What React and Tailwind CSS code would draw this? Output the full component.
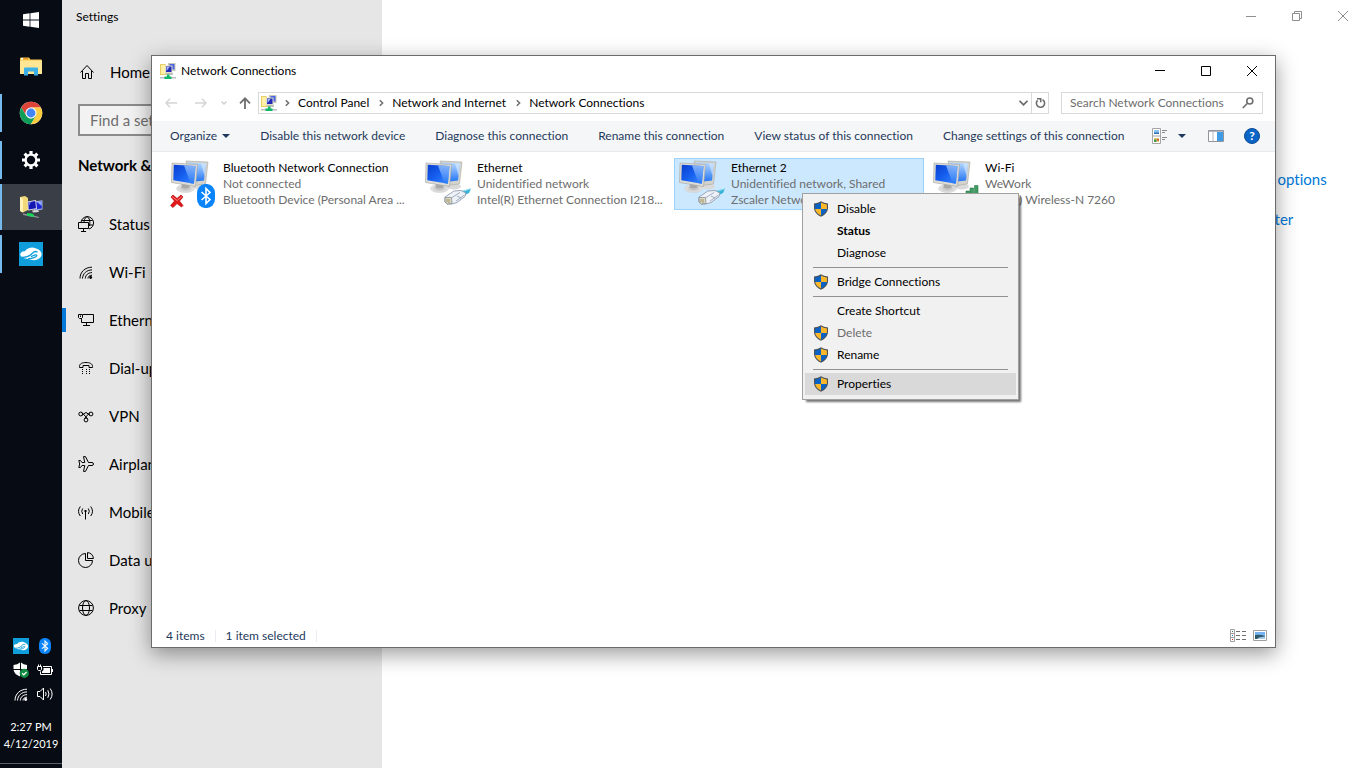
import { useId } from 'react';

const ORANGE = '#fdb82a';
const BLUE = '#0a63c4';

/* ---------- Taskbar icons ---------- */

const WindowsIcon = () => (
    <svg viewBox="0 0 16 16" className="w-4 h-4 fill-white" aria-hidden="true">
        <path d="M0 2.2 6.6 1.3V7.6H0zM7.4 1.2 16 0V7.6H7.4zM0 8.4H6.6V14.7L0 13.8zM7.4 8.4H16V16L7.4 14.8z" />
    </svg>
);

const FolderIcon = () => (
    <svg viewBox="0 0 22 19" className="w-[22px] h-[19px]" aria-hidden="true">
        <path d="M0 1.5Q0 .5 1 .5H9L10.5 2.5H21Q22 2.5 22 3.5V17H0z" fill="#f5c84b" />
        <path d="M1 1H3V2.4H1z" fill="#fff" />
        <path d="M3.5 1H8V2.4H3.5z" fill="#e8912a" />
        <path d="M0 4.5Q0 3.5 1 3.5H21Q22 3.5 22 4.5V16Q22 17 21 17H1Q0 17 0 16z" fill="#ffe694" />
        <path d="M4 11.5Q4 10.5 5 10.5H17Q18 10.5 18 11.5V18.5H14V14.5H8V18.5H4z" fill="#3bb0e6" />
    </svg>
);

const ChromeIcon = () => (
    <svg viewBox="0 0 48 48" className="w-6 h-6" aria-hidden="true">
        <circle cx="24" cy="24" r="22.5" fill="#fff" />
        <path d="M24 1.5A22.5 22.5 0 0 1 43.6 13H24A11 11 0 0 0 14.4 29.5L4.6 12.8A22.5 22.5 0 0 1 24 1.5z" fill="#db4437" />
        <path d="M43.6 13A22.5 22.5 0 0 1 23.5 46.5L33.5 29.5A11 11 0 0 0 24 13z" fill="#ffcd40" />
        <path d="M4.6 12.8 14.4 29.5A11 11 0 0 0 33.5 29.5L23.5 46.5A22.5 22.5 0 0 1 4.6 12.8z" fill="#0f9d58" />
        <circle cx="24" cy="24" r="10.8" fill="#f1f1f1" />
        <circle cx="24" cy="24" r="8.8" fill="#4285f4" />
    </svg>
);

const GearIcon = () => (
    <svg viewBox="0 0 20 20" className="w-5 h-5" aria-hidden="true">
        <g fill="#fff">
            <path d="M8.4 1H11.6V4H8.4zM8.4 16H11.6V19H8.4z" />
            <path d="M8.4 1H11.6V4H8.4zM8.4 16H11.6V19H8.4z" transform="rotate(45 10 10)" />
            <path d="M8.4 1H11.6V4H8.4zM8.4 16H11.6V19H8.4z" transform="rotate(90 10 10)" />
            <path d="M8.4 1H11.6V4H8.4zM8.4 16H11.6V19H8.4z" transform="rotate(135 10 10)" />
        </g>
        <circle cx="10" cy="10" r="5.4" fill="none" stroke="#fff" strokeWidth="2.4" />
    </svg>
);

const NetFolderIcon = () => (
    <svg viewBox="0 0 24 24" className="w-6 h-6" aria-hidden="true">
        <path d="M1 2 6 1 9 3V15L4 17.5 1 16z" fill="#f1d878" />
        <path d="M1 2 4 4V17.5L1 16z" fill="#fff3b8" />
        <path d="M14.500 6.500 23.500 5.200V14.500L15 16z" fill="#a9b6e4" />
        <path d="M15.500 7.600 22.800 6.400V13.400L16 14.600z" fill="#1c25d4" />
        <path d="M18 7.200 22.800 6.400V11z" fill="#8fa8f7" />
        <path d="M8.500 6.500 17 5 18 14 9 15.500z" fill="#e3e3f0" />
        <path d="M9.300 7.300 16.300 6.100 17 13.300 9.700 14.500z" fill="#1416b4" />
        <path d="M9.300 7.300 12 6.900 10 11z" fill="#6e84ea" />
        <path d="M13 15.500 19 15 20 17 14 17.500z" fill="#d8d8d8" />
        <path d="M4 18.500 11 19.500 20 22V23L11 21.500 4 20z" fill="#8d9196" />
        <path d="M8 18 13 18.600 15 20V22L8 20.800z" fill="#18d65c" />
    </svg>
);

const ZscalerIcon = ({ className }) => (
    <svg viewBox="0 0 24 24" className={className} aria-hidden="true">
        <path d="M0 0H24V24H0z" fill="#0f9edb" />
        <path d="M1.300 12.500C1.300 10.200 3.500 8.800 6 9.200 8 6 13 4.800 16.500 6.200 20 7.200 22.800 9.600 22.600 12.600 22.400 15.600 19.500 18 15.500 18.200 12.500 18.300 11.500 17.300 9 17 6 16.600 1.500 15.500 1.300 12.500z" fill="#fff" />
        <path d="M2.500 15.300C8 15.800 11.500 13.500 13.700 10.900 15 9.500 17 9.300 18.500 10" fill="none" stroke="#0f9edb" strokeWidth="1.400" />
        <path d="M9 16.600C13 16.800 18.200 14.700 17.700 13.200 17.300 12.200 14.500 13.300 12 14.600" fill="none" stroke="#0f9edb" strokeWidth="1.300" />
    </svg>
);

const BluetoothIcon = ({ className }) => (
    <svg viewBox="0 0 18 24" className={className} aria-hidden="true">
        <rect width="18" height="24" rx="8" ry="9" fill="#0a84fa" />
        <path d="M4.5 8 13 15.5 9 19.5V4.5L13 8.5 4.5 16" fill="none" stroke="#fff" strokeWidth="1.6" />
    </svg>
);

const DefenderIcon = () => (
    <svg viewBox="0 0 16 16" className="w-4 h-4" aria-hidden="true">
        <path d="M7 .5V7H.5V3Q4.500 2.500 7 .5zM8 .5Q10.500 2.500 14 3V7H8zM.6 8H7V14.500Q1.500 12.500.6 8zM8 8H13.900Q13 12.500 8 14.500z" fill="#fff" />
        <circle cx="11.300" cy="11.300" r="4.600" fill="#128a43" />
        <path d="M9.200 11.300 10.800 12.900 13.500 10" fill="none" stroke="#fff" strokeWidth="1.300" />
    </svg>
);

const BatteryIcon = () => (
    <svg viewBox="0 0 16 12" className="w-4 h-3" aria-hidden="true">
        <path d="M6 2.500H14.500V10.500H3.500V7.500M15.500 5V8" fill="none" stroke="#fff" />
        <path d="M6.500 4H13V9H5V7.500L6.500 6z" fill="#fff" />
        <path d="M.5 2.500H4.500V5.500L3.500 6.500H1.500L.5 5.500zM1.500 .5V2.500M3.500 .5V2.500" fill="none" stroke="#fff" />
    </svg>
);

const SoundIcon = () => (
    <svg viewBox="0 0 17 14" className="w-[17px] h-[14px]" aria-hidden="true">
        <path d="M.5 4.500H3L6.500 1V13L3 9.500H.5zM8.500 5Q9.800 7 8.500 9M10.800 3.200Q13.200 7 10.800 10.800M13.200 1.500Q17 7 13.200 12.500" fill="none" stroke="#fff" />
    </svg>
);

/* ---------- Settings icons ---------- */

const Line = ({ children, className = 'w-4 h-4' }) => (
    <svg viewBox="0 0 16 16" className={className} fill="none" stroke="currentColor" aria-hidden="true">
        {children}
    </svg>
);

const HomeIcon = () => (
    <Line><path d="M1.500 8.500 8 1.500 14.500 8.500M3.500 7V14.500H6.500V9.500H9.500V14.500H12.500V7" /></Line>
);

const StatusIcon = () => (
    <Line>
        <path d="M3 6.500A6.300 6.300 0 1 1 11 13M9 .5C6.500 2 6 4.500 6 6.500M9 .5C11.500 2 12.500 5 11.500 10M3.500 4.500H14.500M11 9H15" />
        <path d="M.5 6.500H10.500V12.500H.5zM5.500 12.500V15.500M3 15.500H8" />
    </Line>
);

const WifiIcon = ({ className }) => (
    <Line className={className}>
        <path d="M2 14.500C2 8 7 3.200 14 3.200M4.500 14.500C4.800 9.500 8.500 6 14 5.900M7.300 14.500C7.500 11 10 8.700 14 8.600M10 14.500C10 12.600 11.500 11.300 14 11.200" />
        <circle cx="12.700" cy="13.500" r="1.400" fill="currentColor" stroke="none" />
    </Line>
);

const EthernetIcon = () => (
    <Line>
        <path d="M5 2.500H15.500V10.500H3.500V6M8.500 10.500V13.500M5 13.500H12M.5 2.500H4.500V5.500L3.500 6.500H1.500L.5 5.500zM2.500 3.500V5" />
    </Line>
);

const DialIcon = () => (
    <Line>
        <path d="M1.500 6.500C1.500 3.500 4.500 2.500 8 2.500S14.500 3.500 14.500 6.500V7.500H11V5.500H5V7.500H1.500z" />
        <path d="M4 9H5V10H4zM8 9H9V10H8zM11 9H12V10H11zM4 11H5V12H4zM8 11H9V12H8zM11 11H12V12H11zM4 13H5V14H4zM8 13H9V14H8zM11 13H12V14H11z" fill="currentColor" stroke="none" />
    </Line>
);

const VpnIcon = () => (
    <Line>
        <circle cx="2.700" cy="6" r="1.900" />
        <circle cx="13" cy="6" r="1.900" />
        <circle cx="8" cy="12" r="1.900" />
        <path d="M4 4.600 9.500 10.500M11.700 4.600 6.500 10.500M4.300 7.200 7 5Q8 4.200 9 5L11.500 7.300" />
    </Line>
);

const PlaneIcon = () => (
    <Line>
        <path d="M5.500 .6H7.500L10.500 6.500H14Q15.500 6.700 15.500 8T14 9.500H10.500L7.500 15.400H5.500L6.800 9.500H4L2.500 11.500H.8L1.700 8 .8 4.500H2.500L4 6.500H6.800z" />
    </Line>
);

const HotspotIcon = () => (
    <Line>
        <path d="M7.500 7V15.500M4.700 4.500Q2.700 7.300 4.700 10M10.300 4.500Q12.300 7.300 10.300 10M2.300 2.500Q-1.300 7.300 2.300 12M12.700 2.500Q16.300 7.300 12.700 12" />
        <path d="M6.500 6H8.500V8H6.500z" fill="currentColor" stroke="none" />
    </Line>
);

const DataIcon = () => (
    <Line>
        <path d="M7.500 1.500A7 7 0 1 0 14.500 8.500H7.500zM9.500 .6A6 6 0 0 1 15.400 6.500H9.500z" />
    </Line>
);

const GlobeIcon = () => (
    <Line>
        <circle cx="8" cy="8" r="7.400" />
        <ellipse cx="8" cy="8" rx="3.500" ry="7.400" />
        <path d="M1.500 5.500H14.500M1.500 10.500H14.500" />
    </Line>
);

/* ---------- Window icons ---------- */

const NetworkIcon = () => (
    <svg viewBox="0 0 16 16" className="w-4 h-4 shrink-0" aria-hidden="true">
        <path d="M0 1H5L6 2V12H0z" fill="#e8cd62" />
        <path d="M1 2H5V11H1z" fill="#fff2a8" />
        <path d="M8 0H15.500V8H8z" fill="#c9c7b6" />
        <path d="M9.500 1H14.500V6.500H9.500z" fill="#4a64e2" />
        <path d="M5 2.500H12.500V10.500H5z" fill="#dedccb" />
        <path d="M6 3.500H11.500V9H6z" fill="#2429b8" />
        <path d="M6.500 4H9.500L6.500 8z" fill="#a9bff8" />
        <path d="M6 10.500H13V11.500H6z" fill="#8b8b7e" />
        <path d="M0 14H16V15.500H0z" fill="#b9bdc1" />
        <path d="M7 11.500H9.500V13.500H11.500V16H4.500V13.500H7z" fill="#0fb866" />
    </svg>
);

const Monitors = () => {
    const id = useId();
    return (
        <svg viewBox="0 0 40 36" className="w-10 h-9" aria-hidden="true">
            <defs>
                <linearGradient id={id + 'a'} x1="0" y1="0" x2="1" y2="1">
                    <stop offset="0" stopColor="#0a3fd0" />
                    <stop offset=".5" stopColor="#1660f0" />
                    <stop offset="1" stopColor="#3a8bff" />
                </linearGradient>
                <linearGradient id={id + 'b'} x1="0" y1="0" x2="0" y2="1">
                    <stop offset="0" stopColor="#b5d8ff" />
                    <stop offset="1" stopColor="#2274f5" />
                </linearGradient>
                <radialGradient id={id + 'c'}>
                    <stop offset="0" stopColor="#b8b8b8" />
                    <stop offset="1" stopColor="#e6e6e6" />
                </radialGradient>
            </defs>
            <ellipse cx="29" cy="27.500" rx="7" ry="3" fill="#dadada" />
            <path d="M15 2 37 3 34.500 25 19 27z" fill="#d3d2cd" stroke="#aaa9a4" strokeWidth=".6" />
            <path d="M16.500 3.600 35 4.600 33 21.500 20 23z" fill={`url(#${id}b)`} />
            <path d="M30 4.300 35 4.600 33.500 17z" fill="#dbeeff" opacity=".6" />
            <ellipse cx="14.500" cy="29.500" rx="9" ry="4" fill={`url(#${id}c)`} stroke="#c6c6c6" strokeWidth=".5" />
            <path d="M11 23H18L18.500 29H10.500z" fill="#a9a9a9" />
            <path d="M1 4 26.500 5.500 24.500 27.500 .5 23.500z" fill="#dddcd7" stroke="#a3a29e" strokeWidth=".6" />
            <path d="M2.800 5.800 24.600 7 22.900 24.800 2.300 21.300z" fill={`url(#${id}a)`} />
            <path d="M13 6.400 24.600 7 22.900 24.800 19.500 24.200z" fill={`url(#${id}b)`} opacity=".7" />
        </svg>
    );
};

const PlugIcon = () => (
    <svg viewBox="0 0 28 17" className="w-7 h-[17px]" aria-hidden="true">
        <path d="M17 3.500 28 .5 26 5 21 7.500z" fill="#35b4d8" />
        <path d="M20 3.500 27 1" stroke="#8fe0f2" strokeWidth="1" />
        <path d="M2 9 11 3 18 2.500 23 5 22 8.500 14 14.500 9 16 4 16 2 14z" fill="#eef2f7" stroke="#8492a6" strokeWidth=".8" />
        <path d="M2 9.500 8.500 9.500 9 15.500 4.500 16 2 14z" fill="#dcdac4" stroke="#7c838c" strokeWidth=".7" />
        <path d="M4 11V14M6 11V15" stroke="#8f8352" strokeWidth=".8" />
        <path d="M9 9.500 17 4.500M13 13 21.500 7M14 8 18 10" stroke="#8b9ab3" strokeWidth=".8" fill="none" />
    </svg>
);

const RedCross = () => (
    <svg viewBox="0 0 14 14" className="w-[14px] h-[14px]" aria-hidden="true">
        <path d="M1 3 3 1 7 4.500 11 1 13 3 9.500 7 13 11.500 11.500 13 7 9.500 3 13.500 .6 11.500 4.500 7z" fill="#e31717" stroke="#b00808" strokeWidth=".7" />
        <path d="M2 2.500 7 6.500 12 2.500" stroke="#f79a9a" fill="none" strokeWidth=".8" />
    </svg>
);

const SignalIcon = () => (
    <svg viewBox="0 0 18 16" className="w-[18px] h-4" aria-hidden="true">
        <path d="M1 9H4.500V16H1zM5 6H8.500V16H5zM9 3H12.500V16H9zM13.500 .5H17V16H13.500z" fill="#3f9c62" stroke="#2a7a4a" strokeWidth=".6" />
    </svg>
);

const ShieldIcon = () => (
    <svg viewBox="0 0 16 16" className="w-4 h-4" aria-hidden="true">
        <path d="M8 .3Q10.700 2.300 15 2.400V7.500Q14.300 13 8 15.800 1.700 13 1 7.500V2.400Q5.300 2.300 8 .3z" fill="#4c5258" />
        <path d="M8 1.600V8H2.100V3.400Q5.500 3.300 8 1.600zM8 8H13.800Q13 12.200 8 14.500z" fill={BLUE} />
        <path d="M8 1.600Q10.500 3.300 13.900 3.400V8H8zM8 8V14.500Q3 12.200 2.200 8z" fill={ORANGE} />
    </svg>
);

const Caret = () => (
    <svg viewBox="0 0 8 4" className="w-2 h-1 fill-[#1e395b]" aria-hidden="true"><path d="M0 0H8L4 4z" /></svg>
);

const Chevron = () => (
    <svg viewBox="0 0 5 8" className="w-[5px] h-2" fill="none" stroke="#6d6d6d" strokeWidth="1.500" aria-hidden="true">
        <path d="M.8 1.300 3.600 4 .8 6.700" />
    </svg>
);

/* ---------- Data ---------- */

const taskbarItems = [
    { name: 'File Explorer', icon: <FolderIcon /> },
    { name: 'Google Chrome', icon: <ChromeIcon />, open: true },
    { name: 'Settings', icon: <GearIcon />, open: true },
    { name: 'Network Connections', icon: <NetFolderIcon />, open: true, active: true },
    { name: 'Zscaler', icon: <ZscalerIcon className="w-6 h-6" />, open: true },
];

const navItems = [
    { label: 'Status', icon: <StatusIcon /> },
    { label: 'Wi-Fi', icon: <WifiIcon /> },
    { label: 'Ethernet', icon: <EthernetIcon />, active: true },
    { label: 'Dial-up', icon: <DialIcon /> },
    { label: 'VPN', icon: <VpnIcon /> },
    { label: 'Airplane mode', icon: <PlaneIcon /> },
    { label: 'Mobile hotspot', icon: <HotspotIcon /> },
    { label: 'Data usage', icon: <DataIcon /> },
    { label: 'Proxy', icon: <GlobeIcon /> },
];

const commands = [
    'Disable this network device',
    'Diagnose this connection',
    'Rename this connection',
    'View status of this connection',
    'Change settings of this connection',
];

const connections = [
    { name: 'Bluetooth Network Connection', status: 'Not connected', device: 'Bluetooth Device (Personal Area ...', type: 'bluetooth' },
    { name: 'Ethernet', status: 'Unidentified network', device: 'Intel(R) Ethernet Connection I218...', type: 'wired' },
    { name: 'Ethernet 2', status: 'Unidentified network, Shared', device: 'Zscaler Network Adapter', type: 'wired', selected: true },
    { name: 'Wi-Fi', status: 'WeWork', device: 'Intel(R) Wireless-N 7260', type: 'wifi' },
];

const menuGroups = [
    [{ label: 'Disable', shield: true }, { label: 'Status', bold: true }, { label: 'Diagnose' }],
    [{ label: 'Bridge Connections', shield: true }],
    [{ label: 'Create Shortcut' }, { label: 'Delete', shield: true, disabled: true }, { label: 'Rename', shield: true }],
    [{ label: 'Properties', shield: true, hover: true }],
];

/* ---------- Components ---------- */

function Taskbar() {
    return (
        <aside className="flex w-[62px] shrink-0 flex-col bg-[#070c14] text-white">
            <button className="flex h-10 items-center justify-center" aria-label="Start"><WindowsIcon /></button>
            <div className="mt-[3px] flex flex-col gap-px">
                {taskbarItems.map((item) => (
                    <button
                        key={item.name}
                        aria-label={item.name}
                        className={`relative flex h-[46px] w-full items-center justify-center ${item.active ? 'bg-[#3a3f47]' : ''}`}
                    >
                        {item.open && (
                            <span className={`absolute left-0 w-0.5 bg-[#76b9ed] ${item.active ? 'inset-y-0' : 'inset-y-1'}`} />
                        )}
                        {item.icon}
                    </button>
                ))}
            </div>
            <div className="mt-auto grid grid-cols-[24px_24px] justify-center pl-1">
                <button className="flex h-6 items-center justify-center" aria-label="Zscaler"><ZscalerIcon className="w-4 h-4" /></button>
                <button className="flex h-6 items-center justify-center" aria-label="Bluetooth"><BluetoothIcon className="w-3 h-4" /></button>
                <button className="flex h-6 items-center justify-center" aria-label="Security"><DefenderIcon /></button>
                <button className="flex h-6 items-center justify-center" aria-label="Power"><BatteryIcon /></button>
                <button className="flex h-6 items-center justify-center" aria-label="Network"><WifiIcon className="h-4 w-4" /></button>
                <button className="flex h-6 items-center justify-center" aria-label="Volume"><SoundIcon /></button>
            </div>
            <button className="mt-3 mb-[11px] text-center text-[11px] leading-[17px]">
                2:27 PM
                <br />
                4/12/2019
            </button>
            <button className="h-[5px] border-t border-[#5d6167]" aria-label="Show desktop" />
        </aside>
    );
}

function SettingsApp() {
    return (
        <>
            <nav className="w-80 shrink-0 bg-[#e6e6e6] text-[15px]">
                <div className="h-8 pt-px pl-3.5 text-xs leading-8">Settings</div>
                <a href="#home" className="mt-4 flex h-12 items-center gap-[15px] pl-[17px]">
                    <HomeIcon />
                    Home
                </a>
                <input
                    type="search"
                    aria-label="Find a setting"
                    placeholder="Find a setting"
                    className="mx-4 mt-2 block h-8 w-72 border-2 border-[#8b8b8b] bg-[#f2f2f2] px-2.5 placeholder:text-[#6e6e6e]"
                />
                <h1 className="flex h-16 items-center pb-1.5 pl-4 font-bold">Network &amp; Internet</h1>
                {navItems.map((item) => (
                    <a key={item.label} href="#nav" className="flex h-12 items-center">
                        <span className={`mr-3 h-6 w-1 ${item.active ? 'bg-[#0078d7]' : ''}`} />
                        {item.icon}
                        <span className="ml-[15px]">{item.label}</span>
                    </a>
                ))}
            </nav>
            <main className="flex flex-1 flex-col bg-white">
                <div className="flex h-8 justify-end text-[#8f8f8f]">
                    <button className="flex w-[46px] items-center justify-center" aria-label="Minimize">
                        <svg viewBox="0 0 10 10" className="w-2.5 h-2.5" stroke="currentColor"><path d="M0 5.500H10" /></svg>
                    </button>
                    <button className="flex w-[46px] items-center justify-center" aria-label="Restore">
                        <svg viewBox="0 0 10 10" className="w-2.5 h-2.5" fill="none" stroke="currentColor"><path d="M.5 2.500H7.500V9.500H.5zM2.500 2.500V.5H9.500V7.500H7.500" /></svg>
                    </button>
                    <button className="flex w-[46px] items-center justify-center" aria-label="Close">
                        <svg viewBox="0 0 10 10" className="w-2.5 h-2.5" stroke="currentColor"><path d="M0 0 10 10M10 0 0 10" /></svg>
                    </button>
                </div>
                <div className="mt-[87px] ml-auto flex w-[260px] flex-col text-[15px] leading-10 text-[#0078d7]">
                    <a href="#adapter">Change adapter options</a>
                    <a href="#sharing">Change advanced sharing options</a>
                    <a href="#center">Network and Sharing Center</a>
                </div>
            </main>
        </>
    );
}

function ContextMenu() {
    return (
        <div
            role="menu"
            className="absolute top-[34px] left-[127px] z-10 w-[217px] border border-[#a0a0a0] bg-[#f1f1f1] px-0.5 py-1 text-black shadow-[3px_3px_2px_-1px_rgba(0,0,0,0.55)]"
        >
            {menuGroups.map((group, i) => (
                <div key={i} role="group">
                    {i > 0 && <hr className="mx-2 my-[3px] border-[#919191]" />}
                    {group.map((item) => (
                        <button
                            key={item.label}
                            role="menuitem"
                            disabled={item.disabled}
                            className={`flex h-[22px] w-full items-center pl-2 text-left ${item.hover ? 'bg-[#d9d9d9]' : ''} ${item.bold ? 'font-bold' : ''} ${item.disabled ? 'text-[#6d6d6d]' : ''}`}
                        >
                            <span className="mr-2 h-4 w-4">{item.shield && <ShieldIcon />}</span>
                            {item.label}
                        </button>
                    ))}
                </div>
            ))}
        </div>
    );
}

function Connection({ item }) {
    return (
        <li className={`relative flex h-[52px] w-[250px] border ${item.selected ? 'border-[#99d1ff] bg-[#cce8ff]' : 'border-transparent'}`}>
            <div className="relative w-14 shrink-0 pl-1">
                <Monitors />
                {item.type === 'bluetooth' && (
                    <>
                        <span className="absolute bottom-px left-[3px]"><RedCross /></span>
                        <span className="absolute right-2 bottom-px"><BluetoothIcon className="w-[18px] h-6" /></span>
                    </>
                )}
                {item.type === 'wired' && <span className="absolute right-1.5 bottom-1"><PlugIcon /></span>}
                {item.type === 'wifi' && <span className="absolute right-1.5 bottom-2"><SignalIcon /></span>}
            </div>
            <div className="pt-px leading-4 whitespace-nowrap text-[#6d6d6d]">
                <p className="text-black">{item.name}</p>
                <p>{item.status}</p>
                <p>{item.device}</p>
            </div>
            {item.selected && <ContextMenu />}
        </li>
    );
}

function NetworkWindow() {
    return (
        <section className="absolute top-[55px] right-[90px] bottom-[120px] left-[151px] flex flex-col border border-[#6b6b6b] bg-white text-xs shadow-[0_6px_20px_rgba(0,0,0,0.4)]">
            {/* Title bar */}
            <header className="flex h-[30px] items-center pl-2">
                <NetworkIcon />
                <h2 className="ml-[5px]">Network Connections</h2>
                <div className="ml-auto flex h-full">
                    <button className="flex w-[46px] items-center justify-center" aria-label="Minimize">
                        <svg viewBox="0 0 10 10" className="w-2.5 h-2.5" stroke="#000"><path d="M0 4.500H10" /></svg>
                    </button>
                    <button className="flex w-[46px] items-center justify-center" aria-label="Maximize">
                        <svg viewBox="0 0 10 10" className="w-2.5 h-2.5" fill="none" stroke="#000"><path d="M.5 .5H9.500V9.500H.5z" /></svg>
                    </button>
                    <button className="flex w-[46px] items-center justify-center" aria-label="Close">
                        <svg viewBox="0 0 10 10" className="w-2.5 h-2.5" stroke="#000"><path d="M0 0 10 10M10 0 0 10" /></svg>
                    </button>
                </div>
            </header>

            {/* Address bar */}
            <div className="flex h-[35px] items-center pr-3 pb-px pl-[13px]">
                <button aria-label="Back">
                    <svg viewBox="0 0 12 10" className="w-3 h-2.5" fill="none" stroke="#d5d5d5" strokeWidth="1.500"><path d="M12 5H1M5 .8 1 5 5 9.200" /></svg>
                </button>
                <button className="ml-[18px]" aria-label="Forward">
                    <svg viewBox="0 0 12 10" className="w-3 h-2.5" fill="none" stroke="#d5d5d5" strokeWidth="1.500"><path d="M0 5H11M7 .8 11 5 7 9.200" /></svg>
                </button>
                <button className="ml-3.5" aria-label="Recent locations">
                    <svg viewBox="0 0 6 4" className="w-1.5 h-1" fill="none" stroke="#cfcfcf" strokeWidth="1.300"><path d="M.5 .5 3 3 5.500 .5" /></svg>
                </button>
                <button className="ml-3" aria-label="Up">
                    <svg viewBox="0 0 12 12" className="w-3 h-3" fill="none" stroke="#6d6d6d" strokeWidth="1.800"><path d="M6 12V1.500M1 6.300 6 1.300 11 6.300" /></svg>
                </button>
                <div className="ml-[7px] flex h-[22px] flex-1 items-center border border-[#d9d9d9]">
                    <span className="mr-2 ml-0.5"><NetworkIcon /></span>
                    <Chevron />
                    <a href="#control-panel" className="mr-2.5 ml-2">Control Panel</a>
                    <Chevron />
                    <a href="#internet" className="mr-2.5 ml-2">Network and Internet</a>
                    <Chevron />
                    <a href="#connections" className="mr-2.5 ml-2">Network Connections</a>
                    <button className="mr-[3px] ml-auto" aria-label="Previous locations">
                        <svg viewBox="0 0 9 6" className="w-[9px] h-1.5" fill="none" stroke="#6d6d6d" strokeWidth="1.800"><path d="M.5 .8 4.500 4.800 8.500 .8" /></svg>
                    </button>
                    <button className="flex h-full w-[17px] items-center justify-center border-l border-[#d9d9d9]" aria-label="Refresh">
                        <svg viewBox="0 0 11 12" className="w-[11px] h-3" fill="none" stroke="#6d6d6d" strokeWidth="1.600"><path d="M7.500 2.600A4.100 4.100 0 1 1 2.500 3.400M2 1.700H5.700V5.200" /></svg>
                    </button>
                </div>
                <div className="ml-3 flex h-[22px] w-[202px] items-center border border-[#d9d9d9] px-2">
                    <input
                        type="search"
                        aria-label="Search Network Connections"
                        placeholder="Search Network Connections"
                        className="min-w-0 flex-1 placeholder:text-[#6d6d6d]"
                    />
                    <svg viewBox="0 0 12 12" className="w-3 h-3" fill="none" stroke="#6d6d6d" strokeWidth="1.600" aria-hidden="true">
                        <circle cx="7.800" cy="4" r="3" />
                        <path d="M5.500 6.200 .8 11" />
                    </svg>
                </div>
            </div>

            {/* Command bar */}
            <div className="flex h-[31px] items-center border-b border-[#e8e9ea] bg-[#f5f6f7] pr-[15px] pl-[18px] whitespace-nowrap text-[#1e395b]">
                <div className="flex items-center gap-[30px]">
                    <button className="flex items-center gap-[5px]">
                        Organize
                        <Caret />
                    </button>
                    {commands.map((label) => <button key={label}>{label}</button>)}
                </div>
                <div className="ml-auto flex items-center">
                    <button aria-label="Change your view" className="flex items-center gap-2.5">
                        <svg viewBox="0 0 16 16" className="w-4 h-4">
                            <path d="M.5 .5H8.500V15.500H.5zM.5 8H8.500" fill="#fff" stroke="#a5a5a5" />
                            <path d="M2 2H7V6H2z" fill="#8cc3ef" />
                            <path d="M2 4.500H7V6H2z" fill="#2f6fb3" />
                            <path d="M2 10H7V14H2z" fill="#e6c86a" />
                            <path d="M2 11.500H4.500V14H2z" fill="#3f9b55" />
                            <path d="M5 11H7V12.500H5z" fill="#d24d3c" />
                            <path d="M10 2.500H15M10 4.500H13M10 9.500H15M10 11.500H13" stroke="#8a8a8a" />
                        </svg>
                        <Caret />
                    </button>
                    <button aria-label="Show the preview pane" className="ml-[22px]">
                        <svg viewBox="0 0 16 12" className="w-4 h-3">
                            <path d="M.5 .5H15.500V11.500H.5z" fill="#fff" stroke="#8e959c" />
                            <path d="M1 1.500H15M5 2V11" stroke="#b4bac0" />
                            <path d="M9 2H15V11H9z" fill="#3f9be6" />
                        </svg>
                    </button>
                    <button aria-label="Help" className="ml-5 flex h-4 w-4 items-center justify-center rounded-full border border-[#0a4a94] bg-[#0b66c8] font-bold text-white">?</button>
                </div>
            </div>

            {/* Connections */}
            <ul className="flex flex-1 flex-wrap content-start gap-1 px-3.5 pt-1.5">
                {connections.map((item) => <Connection key={item.name} item={item} />)}
            </ul>

            {/* Status bar */}
            <footer className="flex h-[23px] items-center pr-2 pl-3.5 text-[#1e395b]">
                <span className="mr-2.5">4 items</span>
                <span className="h-3 border-l border-[#ececf2]" />
                <span className="mx-2.5">1 item selected</span>
                <span className="h-3 border-l border-[#ececf2]" />
                <button className="ml-auto" aria-label="Details">
                    <svg viewBox="0 0 16 13" className="w-4 h-[13px]" fill="none">
                        <path d="M.5 .5H4.500V12.500H.5zM.5 4.500H4.500M.5 8.500H4.500" stroke="#a0a0a0" />
                        <path d="M6 2.500H10M12 2.500H16M6 6.500H10M12 6.500H16M6 10.500H10M12 10.500H16" stroke="#6f6f6f" />
                        <path d="M2 2H3V3H2z" fill="#3e6e4a" />
                        <path d="M2 6H3V7H2z" fill="#2d7df0" />
                        <path d="M2 10H3V11H2z" fill="#e02020" />
                    </svg>
                </button>
                <button className="ml-[7px]" aria-label="Large icons">
                    <svg viewBox="0 0 14 11" className="w-3.5 h-[11px]">
                        <path d="M.5 .5H13.500V10.500H.5z" fill="#fff" stroke="#a0a0a0" />
                        <path d="M2 2H12V9H2z" fill="#79b4f2" />
                        <path d="M2 5Q6 4 12 6V9H2z" fill="#2e5a6c" />
                        <path d="M6 7.500 12 6.500V9H4z" fill="#a8cbe8" />
                    </svg>
                </button>
            </footer>
        </section>
    );
}

export default function App() {
    return (
        <div className="relative flex h-screen overflow-hidden bg-white font-['Lato','Open_Sans',sans-serif] text-black [font-variant-ligatures:none]">
            <Taskbar />
            <SettingsApp />
            <NetworkWindow />
        </div>
    );
}
